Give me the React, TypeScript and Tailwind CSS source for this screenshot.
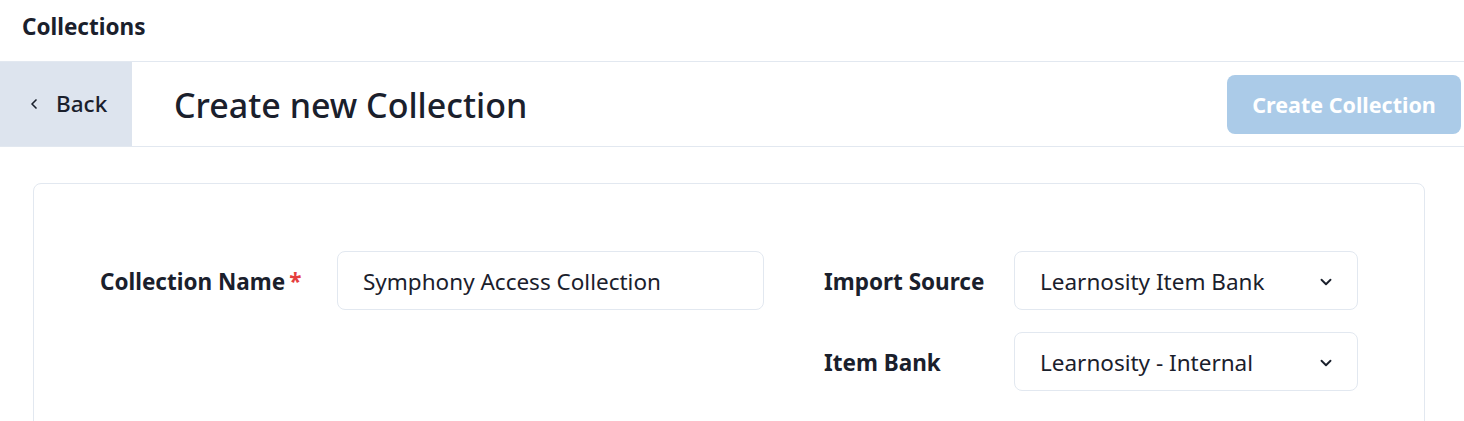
import { ChevronDown, ChevronLeft } from "lucide-react";

function Field({ label, required, children, labelWidth }: { label: string; required?: boolean; children: React.ReactNode; labelWidth: string }) {
  return (
    <div className="flex items-center">
      <label className={`${labelWidth} shrink-0 pt-[3px] text-[22.5px] font-bold text-[#1a202c]`}>
        {label}
        {required && <span className="ml-1 text-[#e53e3e]">*</span>}
      </label>
      {children}
    </div>
  );
}

function Select({ value }: { value: string }) {
  return (
    <div className="flex h-[59px] w-[344px] shrink-0 items-center justify-between rounded-lg border border-[#e2e8f0] bg-white pl-[25px] pr-[22px] pt-[2px] text-[22.5px] text-[#1a202c]">
      <span>{value}</span>
      <ChevronDown size={18} strokeWidth={2.5} />
    </div>
  );
}

export default function App() {
  return (
    <div className="min-h-screen bg-white font-['Noto_Sans',sans-serif] text-[#1a202c]">
      <header className="flex h-[62px] items-center border-b border-[#e2e8f0] px-[22px] pb-[8px]">
        <h1 className="text-[22.5px] font-bold">Collections</h1>
      </header>

      <div className="flex h-[85px] items-center border-b border-[#e2e8f0]">
        <button className="flex h-full w-[132px] shrink-0 items-center gap-[14px] bg-[#dde4ee] pl-[26px] text-[22.5px] font-medium">
          <ChevronLeft size={16} strokeWidth={2.5} />
          Back
        </button>
        <h2 className="ml-[42px] flex-1 pt-[3px] text-[34px] font-medium">Create new Collection</h2>
        <button className="mr-[3px] h-[59px] w-[234px] shrink-0 rounded-lg bg-[#abcbe8] pt-[2px] text-[21.5px] font-bold text-white">
          Create Collection
        </button>
      </div>

      <div className="pl-[33px] pr-[39px] pt-[36px]">
        <div className="flex h-[300px] rounded-lg border border-[#e2e8f0] px-[66px] pt-[67px]">
          <div className="w-[724px] shrink-0">
            <Field label="Collection Name" required labelWidth="w-[237px]">
              <input
                readOnly
                value="Symphony Access Collection"
                className="h-[59px] w-[427px] shrink-0 rounded-lg border border-[#e2e8f0] px-[25px] pt-[2px] text-[22.5px] text-[#1a202c] outline-none"
              />
            </Field>
          </div>
          <div className="flex flex-col gap-[22px]">
            <Field label="Import Source" labelWidth="w-[190px]">
              <Select value="Learnosity Item Bank" />
            </Field>
            <Field label="Item Bank" labelWidth="w-[190px]">
              <Select value="Learnosity - Internal" />
            </Field>
          </div>
        </div>
      </div>
    </div>
  );
}
